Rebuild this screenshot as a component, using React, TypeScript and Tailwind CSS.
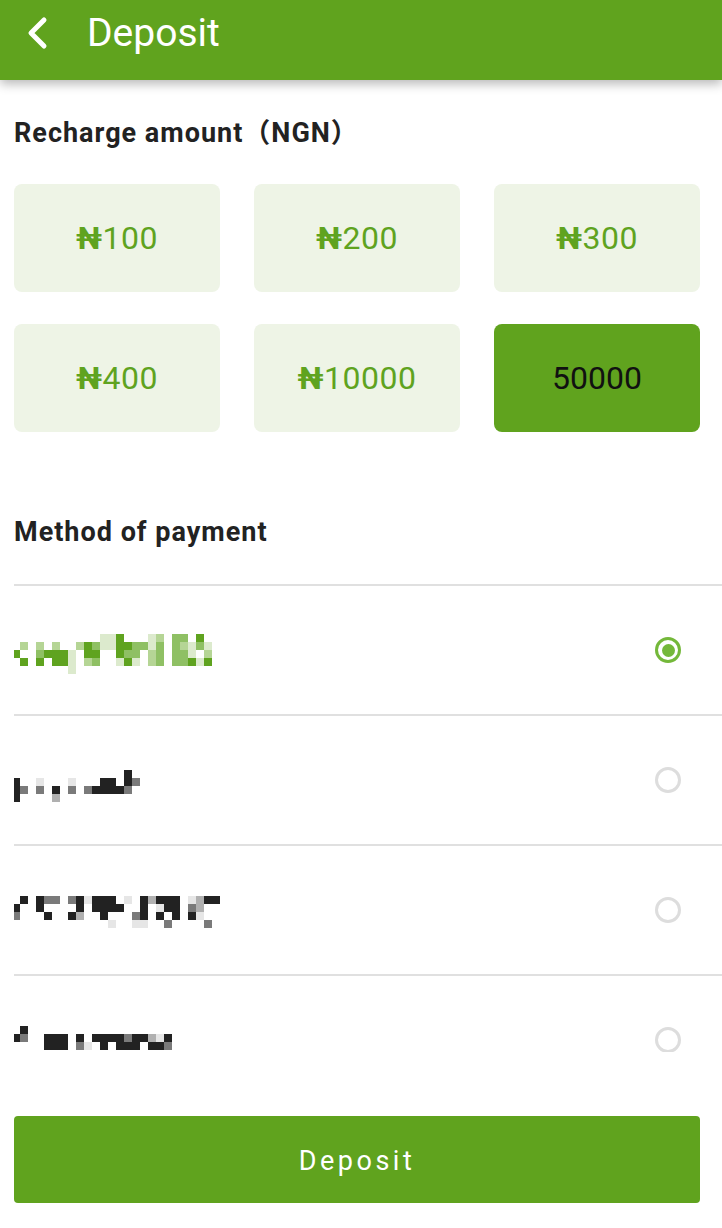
import React, { useState } from 'react';

const amounts = ['100', '200', '300', '400', '10000', '50000'];

const greenShades: Record<string, string> = { a: '#dceacd', b: '#b5d595', c: '#8fc064', d: '#5fa31f' };
const grayShades: Record<string, string> = { a: '#e6e6e6', b: '#b0b0b0', c: '#7a7a7a', d: '#222222' };

// pixelated (censored) names of the payment channels
const methods = [
    {
        id: 1,
        shades: greenShades,
        top: -16,
        rows: [
            '...........aad...ab.cc.d..',
            '.b.b.b..bdcaaddccac.cbaca.',
            'd..cddda.dd..dcc.bc.cca.b.',
            '.d.d.dda.bc..ada.bc.ccdad.',
            '.......a..................',
        ],
    },
    {
        id: 2,
        shades: grayShades,
        top: -10,
        rows: [
            '..............d.',
            'd..a...a...dd.dc',
            'dc.c.d.c.cddddc.',
            'd....b..........',
        ],
    },
    {
        id: 3,
        shades: grayShades,
        top: -14,
        rows: [
            '.d.dcc.cdaddd.a.dbddd.abdd',
            'd..d....d.dddd..d.add.cb..',
            'c...d..db..d...cd.d.d.da..',
            '............a..aa..c....c.',
        ],
    },
    {
        id: 4,
        shades: grayShades,
        top: -14,
        rows: [
            '.d..................',
            'dc..ddd.d.ddddcddbad',
            '....ddd.ca.d.ddd.ddc',
        ],
    },
];

function Mosaic({ rows, shades, top }: { rows: string[]; shades: Record<string, string>; top: number }) {
    const cols = Math.max(...rows.map((r) => r.length));
    return (
        <svg width={cols * 8} height={48} viewBox={`0 0 ${cols * 8} 48`} className="-ml-[2px]">
            {rows.map((r, y) =>
                r.split('').map((ch, x) =>
                    ch === '.' ? null : (
                        <rect key={`${x}-${y}`} x={x * 8} y={24 + top + y * 8} width={8} height={8} fill={shades[ch]} />
                    )
                )
            )}
        </svg>
    );
}

export default function App() {
    const [amount, setAmount] = useState(5);
    const [method, setMethod] = useState(1);

    return (
        <div className="w-[722px] h-[1228px] bg-white overflow-hidden font-['Roboto','Noto_Sans_CJK_SC',sans-serif]">
            <div className="relative z-10 h-[80px] pb-[14px] bg-[#60a31e] flex items-center shadow-[0_4px_10px_rgba(0,0,0,0.28)]">
                <svg width="24" height="34" viewBox="0 0 24 34" className="ml-[25px]">
                    <path d="M19 4 L6 17 L19 30" fill="none" stroke="#ffffff" strokeWidth="5" strokeLinecap="round" strokeLinejoin="round" />
                </svg>
                <span className="ml-[38px] text-white text-[39px] leading-none">Deposit</span>
            </div>

            <div className="pl-[14px] pr-[22px] pt-[32px]">
                <div className="text-[27px] leading-[42px] font-bold tracking-[1px] text-[#222]">
                    Recharge amount（NGN）
                </div>

                <div className="grid grid-cols-3 gap-x-[34px] gap-y-[32px] mt-[30px]">
                    {amounts.map((a, idx) => (
                        <button
                            key={a}
                            onClick={() => setAmount(idx)}
                            className={
                                idx === amount
                                    ? 'h-[108px] rounded-[8px] bg-[#60a31e] text-[#111] text-[32px]'
                                    : 'h-[108px] rounded-[8px] bg-[#eef4e6] text-[#5fa31f] text-[32px] tracking-[0.5px]'
                            }
                        >
                            {idx === amount ? a : (
                                <>
                                    <span className="font-bold">₦</span>
                                    {a}
                                </>
                            )}
                        </button>
                    ))}
                </div>

                <div className="mt-[79px] text-[27px] leading-[42px] font-bold tracking-[1px] text-[#222]">
                    Method of payment
                </div>
            </div>

            <div className="ml-[14px] mt-[31px] h-[468px] overflow-hidden">
                {methods.map((m) => (
                    <div
                        key={m.id}
                        onClick={() => setMethod(m.id)}
                        className="h-[130px] border-t-2 border-[#e0e0e0] flex items-center justify-between pr-[41px]"
                    >
                        <Mosaic rows={m.rows} shades={m.shades} top={m.top} />
                        {method === m.id ? (
                            <div className="w-[26px] h-[26px] rounded-full border-[3px] border-[#74b83a] flex items-center justify-center">
                                <div className="w-[13px] h-[13px] rounded-full bg-[#74b83a]"></div>
                            </div>
                        ) : (
                            <div className="w-[26px] h-[26px] rounded-full border-[3px] border-[#dddddd]"></div>
                        )}
                    </div>
                ))}
            </div>

            <div className="pl-[14px] pr-[22px] mt-[64px]">
                <button className="w-full h-[87px] pt-[4px] rounded-[4px] bg-[#60a31e] text-white text-[27px] tracking-[3.5px]">
                    Deposit
                </button>
            </div>
        </div>
    );
}
